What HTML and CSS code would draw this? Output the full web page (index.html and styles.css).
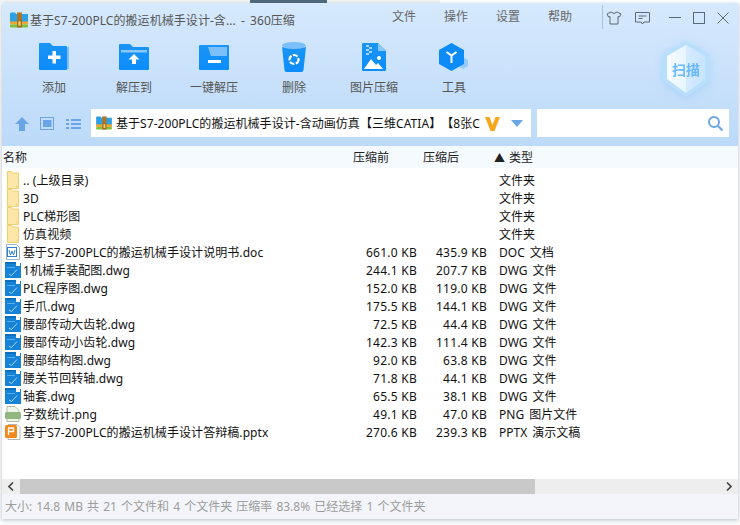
FILE: index.html
```html
<!DOCTYPE html>
<html lang="zh-CN">
<head>
<meta charset="utf-8">
<title>360压缩</title>
<link rel="stylesheet" href="styles.css">
</head>
<body>
<svg class="defs" width="0" height="0" aria-hidden="true">
  <defs>
    <linearGradient id="blue" x1="0" y1="0" x2="0" y2="1"><stop offset="0" stop-color="#1a95f5"/><stop offset="1" stop-color="#0c8cfd"/></linearGradient>
    <symbol id="zip" viewBox="0 0 18 16">
      <path d="M0 2q0-1.500 1-1.500h4l1 1.500h12v10H0z" fill="#2f9fe6"/>
      <rect x="0" y="9.500" width="18" height="3" fill="#f0a830"/>
      <rect x="0" y="12.500" width="18" height="3" rx="1" fill="#7cc13e"/>
      <rect x="7" y="0.500" width="5" height="15" fill="#a8772a"/>
      <rect x="8" y="9" width="3" height="5" fill="#f7d26a" stroke="#8a5c18" stroke-width=".6"/>
    </symbol>
    <symbol id="folder" viewBox="0 0 16 18">
      <path d="M2.500.5h4l1 1.500h6v15.500h-11z" fill="#fde7a8" stroke="#efd070"/>
      <path d="M11 17.500v-3h2.500z" fill="#f5d880"/>
    </symbol>
    <symbol id="dwg" viewBox="0 0 16 16">
      <rect y="1" width="16" height="15" fill="#1583d8"/>
      <rect x="11" y="0" width="4" height="4" fill="#fff"/>
      <rect x="0" y="0" width="11" height="2" fill="#0f6fbd"/>
      <rect x="2" y="5" width="8" height="1" fill="#5aaee8"/>
      <path d="M4 12l2.500 1.500 5.500-6" fill="none" stroke="#bfe0fa" stroke-width=".9"/>
    </symbol>
  </defs>
</svg>
<div class="window">
  <header class="titlebar">
    <svg class="title-icon" width="18" height="16"><use href="#zip"/></svg>
    <span class="title-text">基于S7-200PLC的搬运机械手设计-含... - 360压缩</span>
    <nav class="menu">
      <span>文件</span><span>操作</span><span>设置</span><span>帮助</span>
    </nav>
    <div class="divider"></div>
    <div class="win-controls">
      <svg width="16" height="14" viewBox="0 0 16 14" fill="none" stroke="#5b6a78"><path d="M5 1L1 3l1.500 3L4 5.500V13h8V5.500l1.500.5L15 3l-4-2q-3 3-6 0z"/></svg>
      <svg class="feedback" width="15" height="13" viewBox="0 0 15 13" fill="none" stroke="#5b6a78"><path d="M.5.500h14v9.500H9l-1.500 2L6 10H.5z"/><path d="M3.500 4h8M3.500 6.500h4"/></svg>
      <svg class="min" width="12" height="12" viewBox="0 0 12 12" stroke="#5b6a78"><path d="M0 5.500h12"/></svg>
      <svg class="max" width="12" height="12" viewBox="0 0 12 12" fill="none" stroke="#5b6a78"><rect x=".5" y=".5" width="11" height="11"/></svg>
      <svg class="close" width="12" height="12" viewBox="0 0 12 12" stroke="#5b6a78"><path d="M.5.500l11 11M11.500.500l-11 11"/></svg>
    </div>
  </header>

  <section class="toolbar">
    <div class="tool">
      <svg width="32" height="28" viewBox="0 0 32 28"><path d="M28 4h3v22h-3z" fill="#7cc0fb"/><path d="M2 0h10l3 3h13q1 0 1 1v22q0 1-1 1H2q-1 0-1-1V1q0-1 1-1z" fill="url(#blue)"/><path d="M10 12.500h4.500V8h3.500v4.500h4.500V16H18v4.500h-3.500V16H10z" fill="#fff"/></svg>
      <span>添加</span>
    </div>
    <div class="tool">
      <svg width="32" height="28" viewBox="0 0 32 28"><path d="M2 1h10l3 3h15q1 0 1 1v21q0 1-1 1H2q-1 0-1-1V2q0-1 1-1z" fill="url(#blue)"/><path d="M3 7h26v2.500H3z" fill="#8cc8fb"/><path d="M16 11l5.500 5.500H18V21h-4v-4.500h-3.500z" fill="#fff"/></svg>
      <span>解压到</span>
    </div>
    <div class="tool">
      <svg width="32" height="28" viewBox="0 0 32 28"><path d="M2 2h28q1 0 1 1v23q0 1-1 1H2q-1 0-1-1V3q0-1 1-1z" fill="url(#blue)"/><path d="M10 4h19v9H13z" fill="#7cc0fb"/><rect x="10" y="17" width="13" height="3" fill="#fff"/></svg>
      <span>一键解压</span>
    </div>
    <div class="tool">
      <svg width="26" height="30" viewBox="0 0 26 30"><ellipse cx="13" cy="3.500" rx="12" ry="3.500" fill="#7cc0fb"/><path d="M1 5q12 4 24 0l-2.500 23q-.2 2-2 2H5.500q-1.800 0-2-2z" fill="url(#blue)"/><circle cx="13" cy="17.500" r="4.500" fill="none" stroke="#fff" stroke-width="2.200" stroke-dasharray="5 1.500"/></svg>
      <span>删除</span>
    </div>
    <div class="tool">
      <svg width="24" height="28" viewBox="0 0 24 28"><path d="M1 0h15l8 8v19q0 1-1 1H1q-1 0-1-1V1q0-1 1-1z" fill="url(#blue)"/><path d="M16 0l8 8h-8z" fill="#8cc8fb"/><path d="M4 2h3v2H4zM7 4h3v2H7zM4 6h3v2H4zM7 8h3v2H7zM4 10h3v2H4z" fill="#a5d4fb"/><path d="M2 26l7-10 5 6 2-2 5 6z" fill="#fff"/><circle cx="17" cy="15" r="2" fill="#fff"/></svg>
      <span>图片压缩</span>
    </div>
    <div class="tool">
      <svg width="30" height="28" viewBox="0 0 30 28"><path d="M24 14l5 3v6l-5 3-5-3z" fill="#94cbfb"/><path d="M12.500 0L25 7v14l-12.500 7L0 21V7z" fill="#0d8cf8"/><path d="M7.500 9l5 3.500 5-3.500M12.500 12.500V20" fill="none" stroke="#fff" stroke-width="2"/></svg>
      <span>工具</span>
    </div>
    <div class="scan">
      <svg class="scan-shield" width="48" height="58" viewBox="0 0 48 58">
        <defs><linearGradient id="sh" x1="0" y1="0" x2="1" y2="0"><stop offset="0" stop-color="#f7fcff"/><stop offset=".5" stop-color="#e8f5ff"/><stop offset=".5" stop-color="#d5ebff"/><stop offset="1" stop-color="#c8e4ff"/></linearGradient></defs>
        <path d="M24 1l23 13v27L24 57 1 41V14z" fill="#b8e0fd"/>
        <path d="M24 5l19 11v23L24 53 5 39V16z" fill="url(#sh)"/>
      </svg>
      <span class="scan-text">扫描</span>
    </div>
  </section>

  <section class="navbar">
    <svg class="nav-up" width="14" height="14" viewBox="0 0 14 14"><path d="M7 0l7 7H10v7H4V7H0z" fill="#6aa5e8"/></svg>
    <svg class="nav-view" width="14" height="13" viewBox="0 0 14 13"><rect x=".5" y=".5" width="13" height="12" fill="none" stroke="#6aa5e8"/><rect x="3" y="3" width="8.500" height="7" fill="#6aa5e8"/></svg>
    <svg class="nav-list" width="15" height="12" viewBox="0 0 15 12" fill="#6aa5e8"><path d="M0 1h3v2H0zM5 1h10v2H5zM0 5h3v2H0zM5 5h10v2H5zM0 9h3v2H0zM5 9h10v2H5z"/></svg>
    <div class="address">
      <svg class="addr-icon" width="16" height="14"><use href="#zip"/></svg>
      <span class="addr-text">基于S7-200PLC的搬运机械手设计-含动画仿真【三维CATIA】【8张C</span>
      <svg class="vip" width="15" height="14" viewBox="0 0 15 14"><path d="M0 0h4.500l3 8 3-8H15L9.500 14h-4z" fill="#f6a81c"/></svg>
      <svg class="addr-drop" width="12" height="7" viewBox="0 0 12 7"><path d="M0 0h12L6 7z" fill="#6aa5e8"/></svg>
    </div>
    <div class="search">
      <svg width="15" height="15" viewBox="0 0 15 15" fill="none" stroke="#6aa5e8" stroke-width="2"><circle cx="6" cy="6" r="5"/><path d="M10 10l4.500 4.500"/></svg>
    </div>
  </section>

  <main class="files">
    <div class="head">
      <span class="c-name">名称</span>
      <span class="c-before">压缩前</span>
      <span class="c-after">压缩后</span>
      <span class="c-type"><i class="sort">▲</i> 类型</span>
    </div>
    <div class="rows">
      <div class="row"><span class="c-name"><svg class="ico" width="16" height="18"><use href="#folder"/></svg>.. (上级目录)</span><span class="c-before"></span><span class="c-after"></span><span class="c-type">文件夹</span></div>
      <div class="row"><span class="c-name"><svg class="ico" width="16" height="18"><use href="#folder"/></svg>3D</span><span class="c-before"></span><span class="c-after"></span><span class="c-type">文件夹</span></div>
      <div class="row"><span class="c-name"><svg class="ico" width="16" height="18"><use href="#folder"/></svg>PLC梯形图</span><span class="c-before"></span><span class="c-after"></span><span class="c-type">文件夹</span></div>
      <div class="row"><span class="c-name"><svg class="ico" width="16" height="18"><use href="#folder"/></svg>仿真视频</span><span class="c-before"></span><span class="c-after"></span><span class="c-type">文件夹</span></div>
      <div class="row"><span class="c-name"><svg class="ico" width="16" height="16" viewBox="0 0 16 16"><path d="M1.500.5h10l3 3v12h-13z" fill="#fff" stroke="#9ab4cc"/><rect x="2.500" y="3.500" width="9" height="9" fill="#fff" stroke="#2f7fd0"/><path d="M4 6l1.500 5L7 7l1.500 4L10 6" fill="none" stroke="#2f7fd0"/></svg>基于S7-200PLC的搬运机械手设计说明书.doc</span><span class="c-before">661.0 KB</span><span class="c-after">435.9 KB</span><span class="c-type">DOC 文档</span></div>
      <div class="row"><span class="c-name"><svg class="ico" width="16" height="16"><use href="#dwg"/></svg>1机械手装配图.dwg</span><span class="c-before">244.1 KB</span><span class="c-after">207.7 KB</span><span class="c-type">DWG 文件</span></div>
      <div class="row"><span class="c-name"><svg class="ico" width="16" height="16"><use href="#dwg"/></svg>PLC程序图.dwg</span><span class="c-before">152.0 KB</span><span class="c-after">119.0 KB</span><span class="c-type">DWG 文件</span></div>
      <div class="row"><span class="c-name"><svg class="ico" width="16" height="16"><use href="#dwg"/></svg>手爪.dwg</span><span class="c-before">175.5 KB</span><span class="c-after">144.1 KB</span><span class="c-type">DWG 文件</span></div>
      <div class="row"><span class="c-name"><svg class="ico" width="16" height="16"><use href="#dwg"/></svg>腰部传动大齿轮.dwg</span><span class="c-before">72.5 KB</span><span class="c-after">44.4 KB</span><span class="c-type">DWG 文件</span></div>
      <div class="row"><span class="c-name"><svg class="ico" width="16" height="16"><use href="#dwg"/></svg>腰部传动小齿轮.dwg</span><span class="c-before">142.3 KB</span><span class="c-after">111.4 KB</span><span class="c-type">DWG 文件</span></div>
      <div class="row"><span class="c-name"><svg class="ico" width="16" height="16"><use href="#dwg"/></svg>腰部结构图.dwg</span><span class="c-before">92.0 KB</span><span class="c-after">63.8 KB</span><span class="c-type">DWG 文件</span></div>
      <div class="row"><span class="c-name"><svg class="ico" width="16" height="16"><use href="#dwg"/></svg>腰关节回转轴.dwg</span><span class="c-before">71.8 KB</span><span class="c-after">44.1 KB</span><span class="c-type">DWG 文件</span></div>
      <div class="row"><span class="c-name"><svg class="ico" width="16" height="16"><use href="#dwg"/></svg>轴套.dwg</span><span class="c-before">65.5 KB</span><span class="c-after">38.1 KB</span><span class="c-type">DWG 文件</span></div>
      <div class="row"><span class="c-name"><svg class="ico" width="16" height="16" viewBox="0 0 16 16"><path d="M2 .5h8l4 4V15.500H2z" fill="#eef4e8" stroke="#a9bf9c"/><rect x="0" y="6" width="16" height="7" rx="1.500" fill="#8fb77f"/></svg>字数统计.png</span><span class="c-before">49.1 KB</span><span class="c-after">47.0 KB</span><span class="c-type">PNG 图片文件</span></div>
      <div class="row"><span class="c-name"><svg class="ico" width="16" height="16" viewBox="0 0 16 16"><path d="M3 .5h9l3 3v12H3z" fill="#fff" stroke="#b5b5b5"/><rect x="0" y="1" width="12" height="13" rx="1.500" fill="#f08a1d"/><path d="M3.500 11V4h5v3.500h-5" fill="none" stroke="#fff" stroke-width="1.300"/></svg>基于S7-200PLC的搬运机械手设计答辩稿.pptx</span><span class="c-before">270.6 KB</span><span class="c-after">239.3 KB</span><span class="c-type">PPTX 演示文稿</span></div>
    </div>
  </main>

  <div class="hscroll">
    <button class="arrow" type="button" aria-label="左"><svg width="6" height="9" viewBox="0 0 6 9" fill="none" stroke="#444" stroke-width="1.600"><path d="M5 .5l-4 4 4 4"/></svg></button>
    <div class="track"><div class="thumb"></div></div>
    <button class="arrow" type="button" aria-label="右"><svg width="6" height="9" viewBox="0 0 6 9" fill="none" stroke="#444" stroke-width="1.600"><path d="M1 .5l4 4-4 4"/></svg></button>
  </div>
  <footer class="status">大小: 14.8 MB 共 21 个文件和 4 个文件夹 压缩率 83.8% 已经选择 1 个文件夹</footer>
</div>
</body>
</html>
```

FILE: styles.css
```css
* { box-sizing: border-box; }
html, body { margin: 0; height: 100%; }
body {
  width: 740px;
  height: 525px;
  overflow: hidden;
  padding: 3px 2px 6px 2px;
  background: linear-gradient(to right, #f3f3f3 0 250px, #4f6b7c 250px 327px, #f3f3f3 327px 440px, #fff 440px);
  background-size: 100% 3px;
  background-repeat: no-repeat;
  background-color: #fafafa;
  font-family: "Noto Sans", "Noto Sans CJK SC", sans-serif;
  font-size: 12px;
  color: #111;
  text-spacing-trim: space-all;
  font-feature-settings: "palt" 0;
}
.defs { position: absolute; }
.window {
  width: 736px;
  height: 516px;
  display: flex;
  flex-direction: column;
  background: linear-gradient(#d6e9fd, #bcdaf9 143px);
  box-shadow: 0 1px 4px rgba(60, 90, 120, .35);
}
.titlebar {
  height: 33px;
  display: flex;
  align-items: center;
  padding-left: 8px;
  flex: none;
}
.title-icon { margin-right: 2px; }
.title-text { width: 268px; color: #555; white-space: nowrap; word-spacing: 2px; letter-spacing: .06px; }
.menu {
  display: flex;
  gap: 28px;
  margin-left: 94px;
  color: #666;
  margin-top: -7px;
}
.divider { width: 1px; height: 24px; background: #a9c4dd; margin: -6px 0 0 30px; }
.win-controls { display: flex; align-items: center; margin-left: 3px; margin-top: -3px; }
.feedback { margin-left: 13px; }
.min { margin-left: 19px; }
.max { margin-left: 12px; }
.close { margin-left: 12px; }

.toolbar {
  height: 68px;
  display: flex;
  align-items: flex-start;
  padding-left: 12px;
  flex: none;
}
.tool {
  width: 80px;
  height: 60px;
  display: flex;
  flex-direction: column;
  align-items: center;
  color: #555;
  padding-top: 6px;
}
.tool svg { height: 30px; flex: none; }
.tool span { margin-top: 7px; line-height: 18px; }
.scan {
  margin-left: 168px;
  width: 48px;
  height: 58px;
  margin-top: 4px;
  position: relative;
  display: flex;
  align-items: center;
  justify-content: center;
  filter: drop-shadow(0 2px 4px rgba(150, 200, 250, .6));
}
.scan-shield { position: absolute; left: 0; top: 0; }
.scan-text { position: relative; color: #6cb9fa; font-weight: 700; font-size: 14px; }

.navbar {
  height: 42px;
  display: flex;
  align-items: flex-start;
  padding-top: 5px;
  flex: none;
}
.nav-up { margin: 8px 0 0 13px; }
.nav-view { margin: 8px 0 0 11px; }
.nav-list { margin: 9px 0 0 12px; }
.address {
  width: 440px;
  height: 28px;
  margin-left: 10px;
  background: #fff;
  display: flex;
  align-items: center;
  padding-left: 5px;
  position: relative;
  overflow: hidden;
}
.addr-icon { flex: none; margin-right: 4px; }
.addr-text { white-space: nowrap; width: 368px; overflow: hidden; flex: none; letter-spacing: .05px; }
.vip { position: absolute; left: 394px; top: 8px; }
.addr-drop { position: absolute; left: 420px; top: 11px; }
.search {
  width: 192px;
  height: 28px;
  margin-left: 6px;
  background: #fff;
  display: flex;
  align-items: center;
  justify-content: flex-end;
  padding-right: 6px;
}

.files {
  flex: 1;
  min-height: 0;
  background: #fff;
  display: flex;
  flex-direction: column;
}
.head {
  height: 22px;
  flex: none;
  display: flex;
  align-items: center;
  background: #f5faff;
  padding: 0 0 1px 1px;
  font-size: 12px;
  color: #222;
}
.head .c-name { width: 350px; }
.head .c-before { width: 70px; }
.head .c-after { width: 71px; }
.sort { font-style: normal; font-size: 11px; margin-right: 1px; }
.rows { padding-top: 3px; padding-left: 1px; }
.row {
  height: 18px;
  display: flex;
  align-items: center;
  white-space: nowrap;
}
.row .c-name { width: 344px; display: flex; align-items: center; letter-spacing: .07px; }
.ico { flex: none; margin: 0 2px 0 2px; }
.row .c-before { width: 70px; text-align: right; letter-spacing: .25px; }
.row .c-after { width: 70px; text-align: right; letter-spacing: .25px; }
.row .c-type { margin-left: 12px; word-spacing: 2px; }

.hscroll {
  height: 15px;
  flex: none;
  display: flex;
  background: #eee;
}
.arrow {
  width: 18px;
  height: 15px;
  padding: 0;
  border: 0;
  background: transparent;
  display: flex;
  align-items: center;
  justify-content: center;
  flex: none;
}
.track { flex: 1; }
.thumb { width: 515px; height: 15px; background: #c9c9c9; }
.status {
  height: 25px;
  flex: none;
  background: #f3f5fa;
  color: #9c9c9c;
  font-size: 12px;
  word-spacing: 1px;
  line-height: 25px;
  padding-left: 3px;
  white-space: nowrap;
}
```
